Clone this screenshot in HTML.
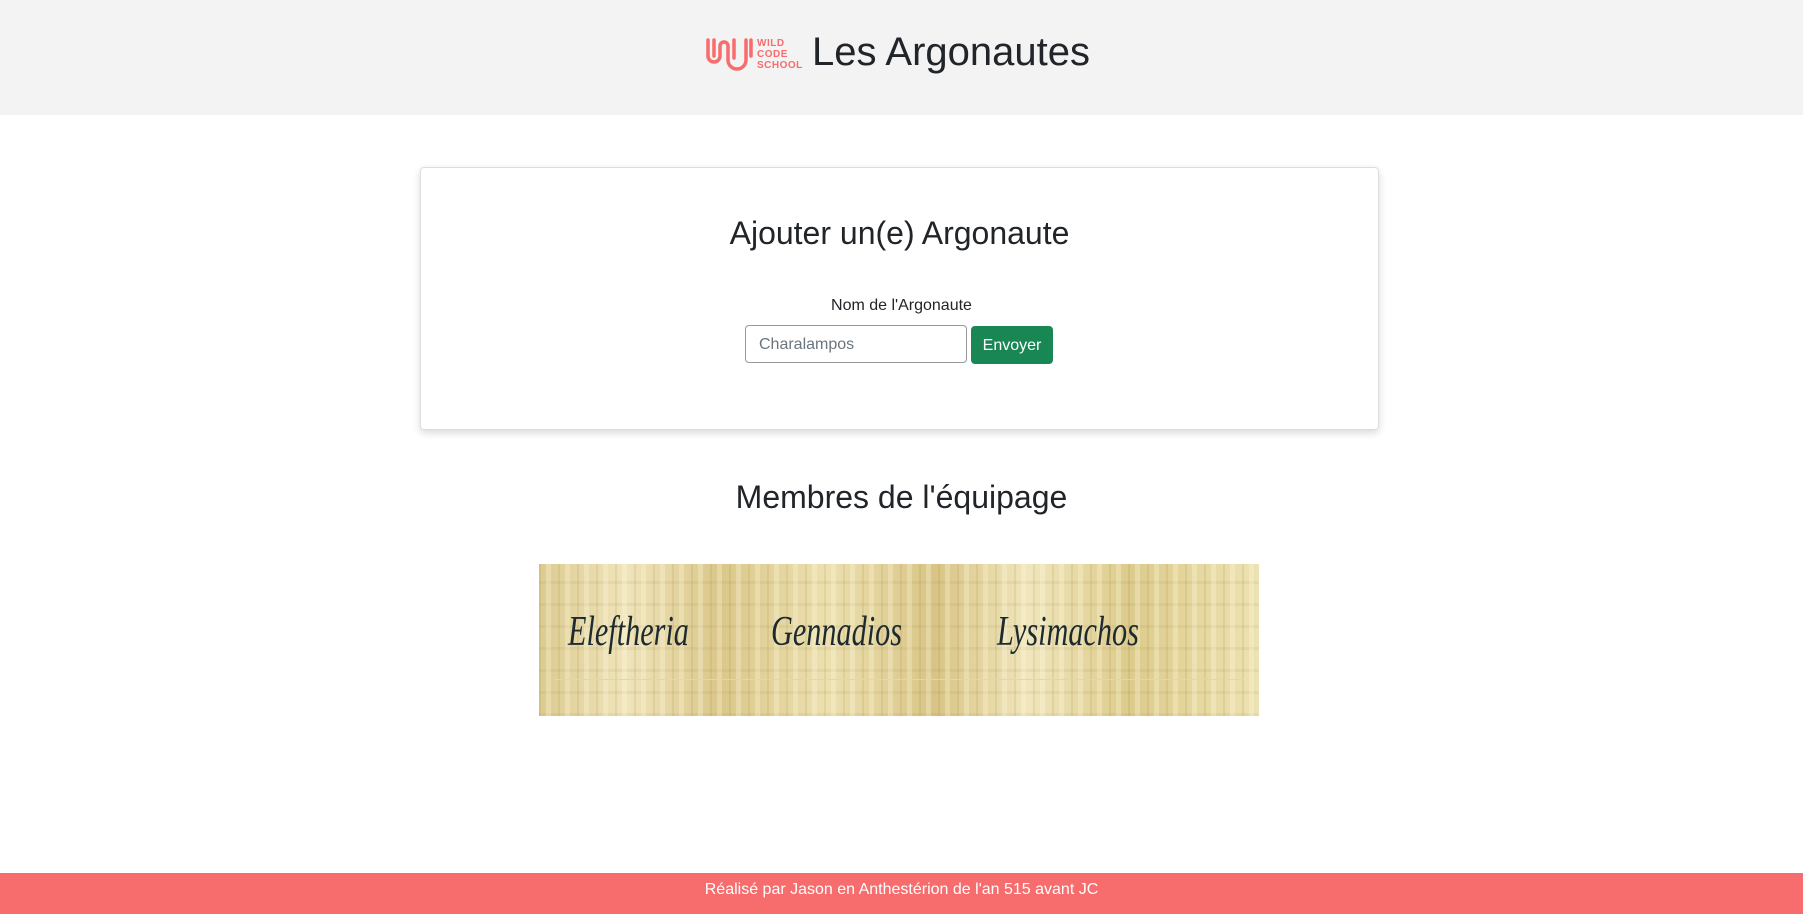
<!DOCTYPE html>
<html><head><meta charset="utf-8"><style>
body{margin:0;width:1803px;height:914px;position:relative;background:#fff;font-family:"Liberation Sans",sans-serif;color:#212529;overflow:hidden}
.hdr{position:absolute;left:0;top:0;width:1803px;height:115px;background:#f3f3f3}
.ttl{position:absolute;left:812px;top:25px;font-size:40px;line-height:54px}
.card{position:absolute;left:420px;top:167px;width:957px;height:261px;border:1px solid #ddd;border-radius:4px;box-shadow:0 3px 8px rgba(0,0,0,.15);background:#fff}
.h2{position:absolute;width:100%;text-align:center;font-size:32px}
.lbl{position:absolute;left:0;width:100%;text-align:center;top:297px;font-size:16px}
.inp{position:absolute;left:745px;top:325px;border:1px solid #999;border-radius:4px;box-sizing:border-box;width:222px;height:38px;padding-left:13px;line-height:37px;color:#6c757d;font-size:16px}
.btn{position:absolute;left:971px;top:326px;width:82px;height:38px;background:#198754;color:#fff;border-radius:4px;text-align:center;line-height:40px;font-size:16px}
.pap{position:absolute;left:539px;top:564px;width:720px;height:152px;background:
repeating-linear-gradient(90deg,rgba(160,130,50,.14) 0 2px,transparent 2px 7px,rgba(255,250,220,.3) 7px 12px,transparent 12px 19px),
repeating-linear-gradient(0deg,rgba(160,130,50,.1) 0 3px,transparent 3px 22px),
linear-gradient(90deg,#dccb90,#efe4bb 12%,#dac78a 25%,#ece0b0 40%,#d8c486 55%,#f0e6bd 68%,#dccb8c 82%,#ede2b2)}
.nm{position:absolute;top:44px;font-family:"Liberation Serif",serif;font-style:italic;font-size:42px;color:#1d2a30;transform:scaleX(.72);transform-origin:left}
.line{position:absolute;left:15px;right:15px;top:115px;height:1px;background:#cfd6dc}
.ft{position:absolute;left:0;top:873px;width:1803px;height:41px;background:#f76c6c;color:#fff;text-align:center;line-height:34px;font-size:16px}
</style></head><body>
<div class="hdr">
<svg style="position:absolute;left:705px;top:36px" width="50" height="36" viewBox="0 0 50 36" fill="none" stroke="#f76c6c" stroke-width="3.5" stroke-linecap="round"><path d="M3 4v16a6 6 0 0 0 12 0V10a4 4 0 0 1 8 0v14a9 9 0 0 0 18 0V4M9 4v16M29 4v18M46 4v16"/></svg>
<div style="position:absolute;left:757px;top:38px;color:#f76c6c;font-size:10px;font-weight:bold;line-height:11px;letter-spacing:.5px">WILD<br>CODE<br>SCHOOL</div>
<div class="ttl">Les Argonautes</div>
</div>
<div class="card"><div class="h2" style="top:47px">Ajouter un(e) Argonaute</div></div>
<div class="lbl">Nom de l'Argonaute</div>
<div class="inp">Charalampos</div>
<div class="btn">Envoyer</div>
<div class="h2" style="top:479px">Membres de l'équipage</div>
<div class="pap">
<div class="nm" style="left:29px">Eleftheria</div>
<div class="nm" style="left:232px">Gennadios</div>
<div class="nm" style="left:458px">Lysimachos</div>
<div class="line"></div>
</div>
<div class="ft">Réalisé par Jason en Anthestérion de l'an 515 avant JC</div>
</body></html>
